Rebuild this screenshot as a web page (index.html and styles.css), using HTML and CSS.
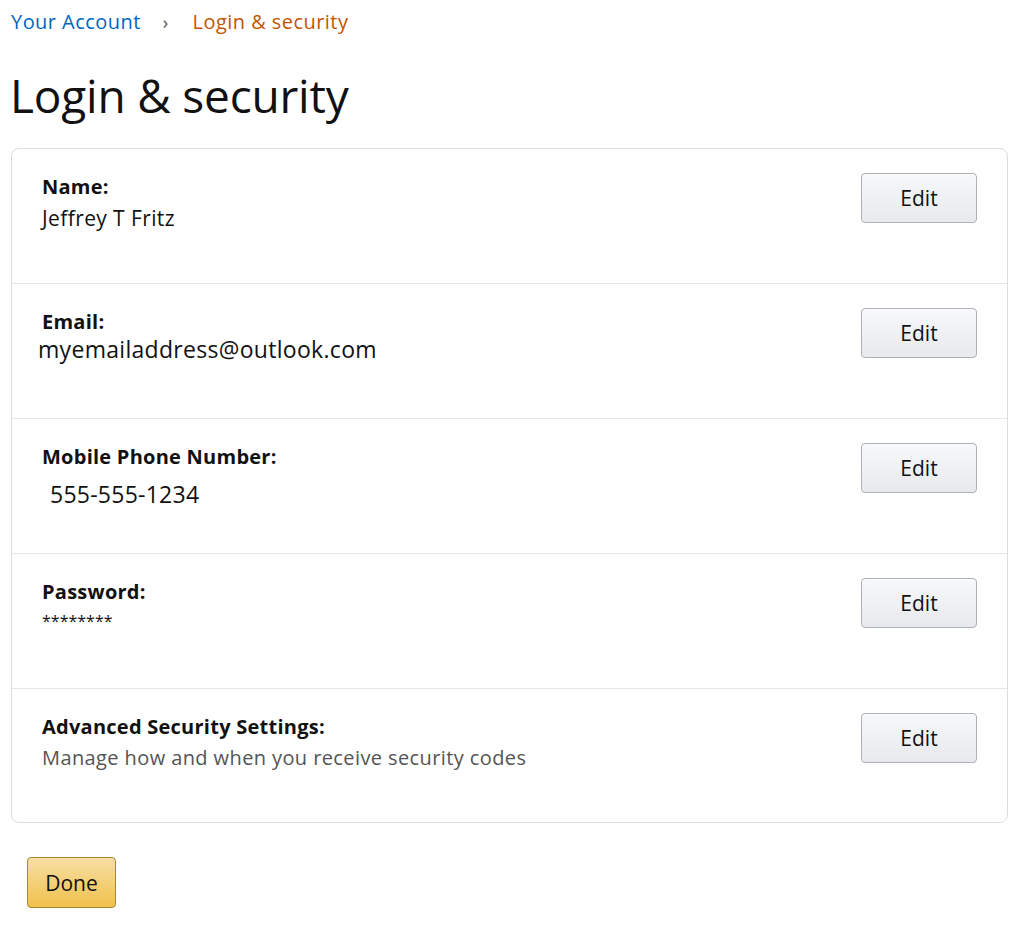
FILE: index.html
```html
<!DOCTYPE html>
<html>
<head>
<meta charset="utf-8">
<link rel="stylesheet" href="styles.css">
</head>
<body>
<div class="page">
  <nav class="crumbs">
    <a class="crumb-link" href="#">Your Account</a>
    <span class="crumb-sep">›</span>
    <span class="crumb-current">Login &amp; security</span>
  </nav>
  <h1 class="title">Login &amp; security</h1>
  <div class="card">
    <div class="row">
      <div class="info">
        <div class="label">Name:</div>
        <div class="value v-name">Jeffrey T Fritz</div>
      </div>
      <button class="edit">Edit</button>
    </div>
    <div class="row">
      <div class="info">
        <div class="label">Email:</div>
        <div class="value v-email">myemailaddress@outlook.com</div>
      </div>
      <button class="edit">Edit</button>
    </div>
    <div class="row">
      <div class="info">
        <div class="label">Mobile Phone Number:</div>
        <div class="value v-phone">555-555-1234</div>
      </div>
      <button class="edit">Edit</button>
    </div>
    <div class="row">
      <div class="info">
        <div class="label">Password:</div>
        <div class="value v-pass">********</div>
      </div>
      <button class="edit">Edit</button>
    </div>
    <div class="row">
      <div class="info">
        <div class="label">Advanced Security Settings:</div>
        <div class="value v-adv">Manage how and when you receive security codes</div>
      </div>
      <button class="edit">Edit</button>
    </div>
  </div>
  <button class="done">Done</button>
</div>
</body>
</html>
```
FILE: styles.css
```css
html, body {
  margin: 0;
  padding: 0;
  background: #fff;
}
body {
  font-family: "Open Sans", "Noto Sans", sans-serif;
  color: #111;
}
.page {
  padding: 8px 16px 0 11px;
}
.crumbs {
  display: flex;
  align-items: center;
  font-size: 20px;
  line-height: 28px;
  letter-spacing: 0.45px;
}
.crumb-link {
  color: #0066c0;
  text-decoration: none;
}
.crumb-sep {
  color: #555;
  margin: 0 24px 0 22px;
  font-size: 18px;
}
.crumb-current {
  color: #c45500;
}
.title {
  font-weight: 400;
  font-size: 46px;
  line-height: 60px;
  margin: 29px 0 23px -1px;
  letter-spacing: -0.2px;
}
.card {
  border: 1px solid #ddd;
  border-radius: 8px;
  width: 995px;
}
.row {
  display: flex;
  justify-content: space-between;
  align-items: flex-start;
  height: 135px;
  box-sizing: border-box;
  padding: 24px 30px 0 30px;
  border-bottom: 1px solid #e7e7e7;
}
.row:last-child {
  border-bottom: none;
  height: 133px;
}
.label {
  font-weight: 700;
  font-size: 20px;
  line-height: 28px;
  letter-spacing: 0.25px;
}
.value {
  font-size: 21px;
  line-height: 30px;
}
.v-name {
  letter-spacing: 0.4px;
  margin-top: 2px;
}
.v-email {
  font-size: 23px;
  letter-spacing: 0.3px;
  margin-left: -4px;
  margin-top: -2px;
}
.v-phone {
  font-size: 23px;
  letter-spacing: 0.25px;
  margin-left: 8px;
  margin-top: 8px;
}
.v-pass {
  font-size: 16px;
}
.v-adv {
  color: #555;
  font-size: 20px;
  letter-spacing: 0.4px;
  margin-top: 2px;
}
.edit {
  width: 116px;
  height: 50px;
  border: 1px solid #adb1b8;
  border-radius: 4px;
  background: linear-gradient(to bottom, #f7f8fa, #e7e9ec);
  font-family: inherit;
  font-size: 21px;
  color: #111;
  box-shadow: 0 1px 0 rgba(255,255,255,.6) inset;
  cursor: pointer;
  padding: 0;
}
.done {
  margin: 34px 0 0 16px;
  width: 89px;
  height: 51px;
  border: 1px solid #a88734;
  border-radius: 4px;
  background: linear-gradient(to bottom, #f7dfa5, #f0c14b);
  font-family: inherit;
  font-size: 21px;
  color: #111;
  cursor: pointer;
  padding: 0;
}
```
